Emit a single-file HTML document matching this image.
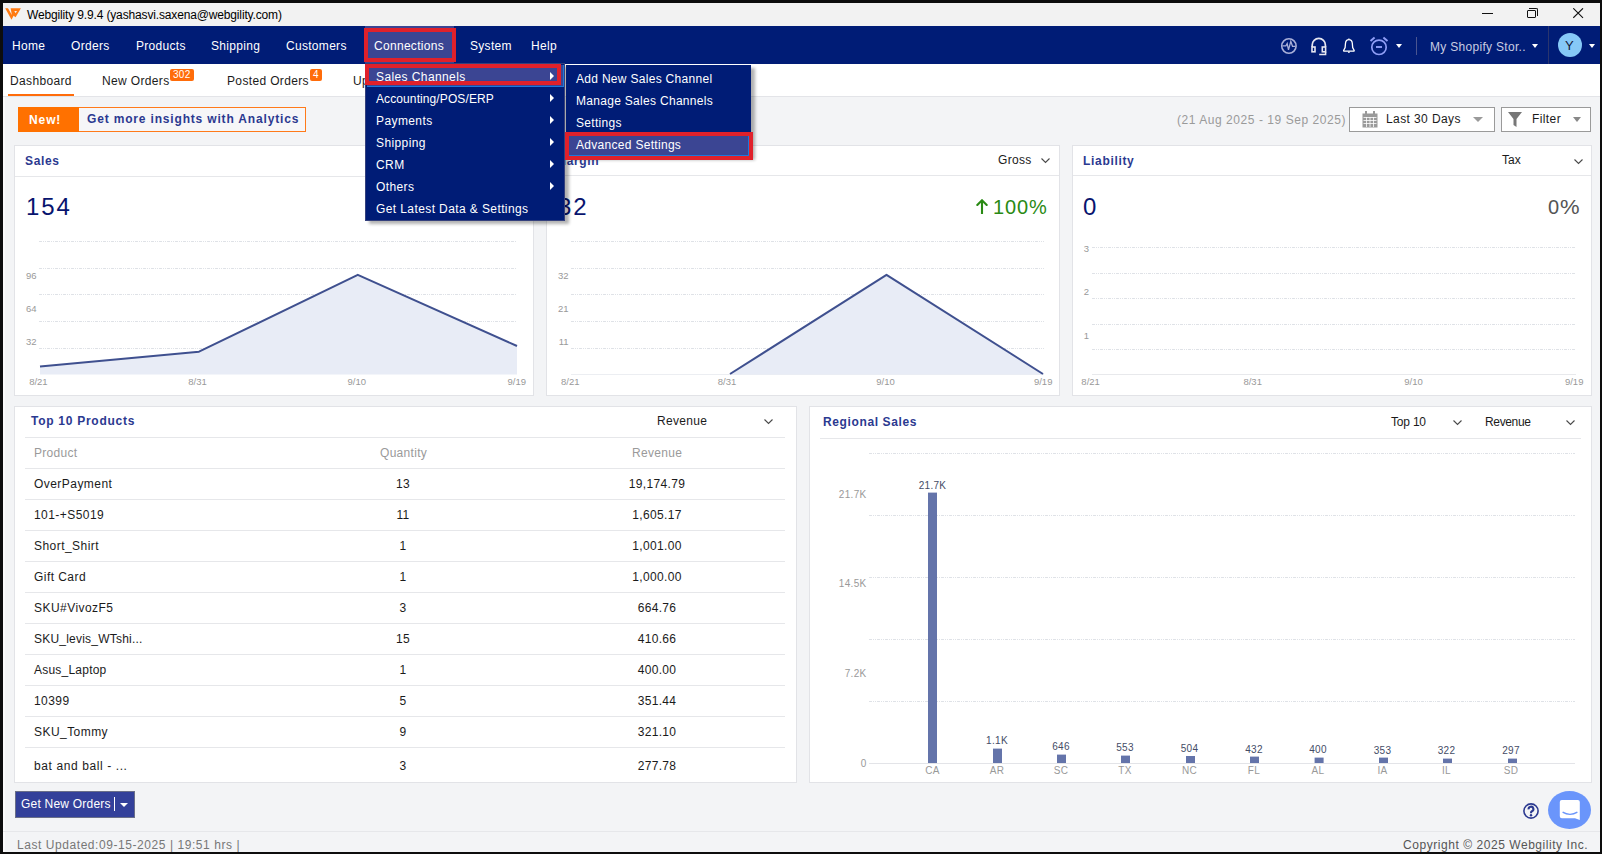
<!DOCTYPE html>
<html><head><meta charset="utf-8">
<style>
*{box-sizing:border-box;margin:0;padding:0}
html,body{width:1602px;height:854px;overflow:hidden;background:#f3f4f6;font-family:"Liberation Sans",sans-serif;font-size:12px;color:#222;position:relative}
.a{position:absolute;white-space:nowrap}
.bd{position:absolute;background:#0d0d0d;z-index:50}
#title{position:absolute;left:3px;top:3px;width:1597px;height:23px;background:#f2f2f2}
#nav{position:absolute;left:3px;top:26px;width:1597px;height:38px;background:#001c76}
.ni{position:absolute;top:27px;height:38px;line-height:38px;color:#fff;font-size:12px;letter-spacing:0.3px;white-space:nowrap}
#tabs{position:absolute;left:3px;top:64px;width:1597px;height:33px;background:#fff;border-bottom:1px solid #e3e4e8}
.tab{position:absolute;top:74px;font-size:12px;letter-spacing:0.35px;color:#1b1b1b;white-space:nowrap}
.badge{position:absolute;background:#ff6c0a;color:#fff;font-size:10px;height:12px;line-height:12px;border-radius:2px;padding:0 3px;letter-spacing:0.3px}
.card{position:absolute;background:#fff;border:1px solid #e2e3e7}
.ch{position:absolute;left:0;top:0;right:0;height:31px;border-bottom:1px solid #e6e7ea}
.ct{position:absolute;top:8px;left:10px;font-weight:bold;color:#2b3990;font-size:12px;letter-spacing:0.55px;white-space:nowrap}
.big{position:absolute;font-size:24px;color:#0c1e6e;white-space:nowrap}
.ax{position:absolute;font-size:9px;color:#8a8a8a;white-space:nowrap}
.menu{position:absolute;background:#001c76;box-shadow:4px 3px 3px rgba(0,0,0,0.3)}
.mi{position:absolute;height:22px;line-height:22px;color:#fff;font-size:12px;letter-spacing:0.4px;white-space:nowrap}
.arr{position:absolute;width:0;height:0;border-top:4px solid transparent;border-bottom:4px solid transparent;border-left:4px solid #fff}
.red{position:absolute;border:3px solid #e0212b}
.drop{position:absolute;font-size:12px;color:#1b1b1b;letter-spacing:0.3px;white-space:nowrap}
.chev{position:absolute;width:6px;height:6px;border-right:1px solid #444;border-bottom:1px solid #444;transform:rotate(45deg)}
.td{position:absolute;font-size:12px;color:#1b1b1b;letter-spacing:0.3px;white-space:nowrap}
.caret{position:absolute;width:0;height:0;border-left:3.5px solid transparent;border-right:3.5px solid transparent;border-top:4px solid #fff}
</style></head><body>
<!-- borders -->
<div class="bd" style="left:0;top:0;width:1602px;height:3px"></div>
<div class="bd" style="left:0;top:0;width:3px;height:854px"></div>
<div class="bd" style="left:1600px;top:0;width:2px;height:854px"></div>
<div class="bd" style="left:0;top:852px;width:1602px;height:2px"></div>

<div class="a" style="left:3px;top:97px;width:2px;height:755px;background:#fafafb"></div>
<div id="title"></div>
<svg class="a" style="left:5px;top:8px" width="17" height="13" viewBox="0 0 17 13"><path d="M0.2 0.3 L3 0.3 L6.9 6.9 L5.6 0.3 L15.9 0.3 L10.6 9.2 L8.6 7.8 L6.5 11.8 Z M9.3 3.1 L12 3.1 L10.6 5.2 Z" fill="#ff7a10" fill-rule="evenodd"/></svg>
<div class="a" style="left:27px;top:8px;font-size:12px;color:#000;letter-spacing:-0.15px">Webgility 9.9.4 (yashasvi.saxena@webgility.com)</div>
<!-- window controls -->
<div class="a" style="left:1482px;top:13px;width:11px;height:1px;background:#111"></div>
<div class="a" style="left:1527px;top:10px;width:9px;height:8px;border:1px solid #111;border-radius:1px"></div>
<div class="a" style="left:1529px;top:8px;width:9px;height:8px;border-top:1px solid #111;border-right:1px solid #111;border-top-right-radius:2px"></div>
<svg class="a" style="left:1573px;top:8px" width="11" height="11" viewBox="0 0 11 11"><path d="M0.3 0.3 L10 9.8 M10 0.3 L0.3 9.8" stroke="#111" stroke-width="1.1"/></svg>

<div id="nav"></div>
<div class="ni" style="left:12px">Home</div>
<div class="ni" style="left:71px">Orders</div>
<div class="ni" style="left:136px">Products</div>
<div class="ni" style="left:211px">Shipping</div>
<div class="ni" style="left:286px">Customers</div>
<div class="a" style="left:365px;top:26px;width:89px;height:37px;background:#3b4593"></div>
<div class="red" style="left:364px;top:28px;width:92px;height:34px;border-width:4px"></div>
<div class="ni" style="left:374px">Connections</div>
<div class="ni" style="left:470px">System</div>
<div class="ni" style="left:531px">Help</div>

<!-- right nav icons -->
<svg class="a" style="left:1276px;top:33px" width="134" height="27" viewBox="0 0 134 27">
<circle cx="12.9" cy="13" r="7.2" fill="none" stroke="#a9b0d9" stroke-width="1.6"/>
<polyline points="6.4,12.9 9.9,12.9 11.2,10.6 12.5,16.9 14.8,8.4 16.5,13.3 19.4,13.3" fill="none" stroke="#a9b0d9" stroke-width="1.3" stroke-linejoin="miter"/>
<path d="M36.2 14 V12 A6.6 6.6 0 0 1 49.4 12 V14" fill="none" stroke="#e6e7f0" stroke-width="1.7"/>
<rect x="36" y="14" width="3" height="4.8" fill="none" stroke="#e6e7f0" stroke-width="1.6"/>
<rect x="46.3" y="14" width="3.3" height="4.8" fill="none" stroke="#e6e7f0" stroke-width="1.6"/>
<path d="M49.6 18.8 V21.6 H43.2" fill="none" stroke="#e6e7f0" stroke-width="1.5"/>
<path d="M12.9 5.4 V6.6 M12.9 6.6 C10.6 6.6 9.7 8.2 9.5 10.2 L9.1 14.6 L7.7 17.2 Q7.3 18.1 8.3 18.1 H17.5 Q18.5 18.1 18.1 17.2 L16.7 14.6 L16.3 10.2 C16.1 8.2 15.2 6.6 12.9 6.6 Z" transform="translate(60,0)" fill="none" stroke="#ffffff" stroke-width="1.3" stroke-linejoin="round"/>
<path d="M72.9 18.6 V20" stroke="#fff" stroke-width="1.4"/>
<circle cx="103" cy="14.3" r="7.2" fill="none" stroke="#8f9ef6" stroke-width="1.7"/>
<path d="M100 14 H106" stroke="#8f9ef6" stroke-width="1.9"/>
<path d="M94.5 8 L98.6 4.6 M111.5 8 L107.4 4.6" stroke="#8f9ef6" stroke-width="2"/>
</svg>
<div class="caret" style="left:1396px;top:44px"></div>
<div class="a" style="left:1416px;top:37px;width:1px;height:18px;background:#4a5590"></div>
<div class="a" style="left:1430px;top:40px;font-size:12px;letter-spacing:0.3px;color:#c9cce2">My Shopify Stor..</div>
<div class="caret" style="left:1532px;top:44px"></div>
<div class="a" style="left:1548px;top:26px;width:1px;height:38px;background:#2a356e"></div>
<div class="a" style="left:1558px;top:33px;width:24px;height:24px;border-radius:50%;background:#86c9f7"></div>
<div class="a" style="left:1565px;top:38px;font-size:13px;color:#141a3a">Y</div>
<div class="caret" style="left:1589px;top:44px"></div>

<!-- tabs -->
<div id="tabs"></div>
<div class="tab" style="left:10px">Dashboard</div>
<div class="a" style="left:8px;top:94px;width:66px;height:2px;background:#ff6c0a"></div>
<div class="tab" style="left:102px">New Orders</div>
<div class="badge" style="left:170px;top:69px">302</div>
<div class="tab" style="left:227px">Posted Orders</div>
<div class="badge" style="left:310px;top:69px">4</div>
<div class="tab" style="left:353px">Up</div>

<!-- banner -->
<div class="a" style="left:18px;top:107px;width:288px;height:25px;border:1px solid #ff7a1a;background:#f6f6f8"></div>
<div class="a" style="left:18px;top:107px;width:61px;height:25px;background:#ff7100"></div>
<div class="a" style="left:29px;top:113px;font-size:12px;font-weight:bold;color:#fff;letter-spacing:0.9px">New!</div>
<div class="a" style="left:87px;top:112px;font-size:12px;font-weight:bold;color:#2b3990;letter-spacing:0.83px">Get more insights with Analytics</div>

<!-- date/filter -->
<div class="a" style="left:1177px;top:113px;font-size:12px;color:#9a9a9a;letter-spacing:0.55px">(21 Aug 2025 - 19 Sep 2025)</div>

<!-- date controls -->
<div class="a" style="left:1349px;top:107px;width:146px;height:25px;border:1px solid #9a9a9a;background:#fff"></div>
<svg class="a" style="left:1362px;top:111px" width="16" height="17" viewBox="0 0 16 17"><rect x="0.5" y="2.5" width="15" height="14" fill="#9a9a9a"/><rect x="3" y="0" width="2" height="4" fill="#9a9a9a"/><rect x="11" y="0" width="2" height="4" fill="#9a9a9a"/><path d="M1.5 6.5H14.5M1.5 9.5H14.5M1.5 12.5H14.5M4.5 6V16M8 6V16M11.5 6V16" stroke="#fff" stroke-width="0.8"/></svg>
<div class="a" style="left:1386px;top:112px;font-size:12px;color:#1b1b1b;letter-spacing:0.4px">Last 30 Days</div>
<div class="caret" style="left:1473px;top:117px;border-top-color:#9a9a9a;border-left-width:5px;border-right-width:5px;border-top-width:5px"></div>
<div class="a" style="left:1501px;top:107px;width:90px;height:25px;border:1px solid #9a9a9a;background:#fff"></div>
<svg class="a" style="left:1508px;top:112px" width="14" height="15" viewBox="0 0 14 15"><path d="M0 0H14L8.5 7V15L5.5 13V7Z" fill="#777"/></svg>
<div class="a" style="left:1532px;top:112px;font-size:12px;color:#1b1b1b;letter-spacing:0.4px">Filter</div>
<div class="caret" style="left:1573px;top:117px;border-top-color:#888;border-left-width:4px;border-right-width:4px;border-top-width:5px"></div>

<!-- row1 cards -->
<div class="card" style="left:14px;top:145px;width:520px;height:251px"></div>
<div class="a" style="left:15px;top:176px;width:518px;height:1px;background:#e6e7ea"></div>
<div class="a" style="left:25px;top:154px;font-size:12px;font-weight:bold;color:#2b3990;letter-spacing:0.66px">Sales</div>
<div class="a" style="left:26px;top:193px;font-size:24px;color:#08146e;letter-spacing:1.9px">154</div>

<div class="card" style="left:546px;top:145px;width:514px;height:251px"></div>
<div class="a" style="left:547px;top:175px;width:512px;height:1px;background:#e6e7ea"></div>
<div class="a" style="left:556px;top:154px;font-size:12px;font-weight:bold;color:#2b3990;letter-spacing:0.66px">Margin</div>
<div class="a" style="left:558px;top:193px;font-size:24px;color:#08146e;letter-spacing:1.9px">32</div>
<div class="a" style="left:998px;top:153px;font-size:12px;color:#1b1b1b;letter-spacing:0.3px">Gross</div>
<svg class="a" style="left:1041px;top:158px" width="10" height="6" viewBox="0 0 10 6"><path d="M0.5 0.5 L4.5 4.5 L8.5 0.5" fill="none" stroke="#4a4a4a" stroke-width="1.1"/></svg>
<svg class="a" style="left:976px;top:199px" width="12" height="16" viewBox="0 0 12 16"><path d="M6 1.5 V15" stroke="#2a8a14" stroke-width="2.1"/><path d="M1.3 6 L6 1.3 L10.7 6" fill="none" stroke="#2a8a14" stroke-width="2.1" stroke-linecap="round"/></svg>
<div class="a" style="left:993px;top:196px;font-size:20px;color:#2a8a14;letter-spacing:0.9px">100%</div>

<div class="card" style="left:1072px;top:145px;width:520px;height:251px"></div>
<div class="a" style="left:1073px;top:175px;width:518px;height:1px;background:#e6e7ea"></div>
<div class="a" style="left:1083px;top:154px;font-size:12px;font-weight:bold;color:#2b3990;letter-spacing:0.68px">Liability</div>
<div class="a" style="left:1083px;top:193px;font-size:24px;color:#08146e;letter-spacing:1.9px">0</div>
<div class="a" style="left:1502px;top:153px;font-size:12px;color:#1b1b1b">Tax</div>
<svg class="a" style="left:1574px;top:159px" width="10" height="6" viewBox="0 0 10 6"><path d="M0.5 0.5 L4.5 4.5 L8.5 0.5" fill="none" stroke="#4a4a4a" stroke-width="1.1"/></svg>
<div class="a" style="left:1548px;top:196px;font-size:20px;color:#555">0</div><div class="a" style="left:1560px;top:196px;font-size:20px;color:#555;transform:scaleX(1.1);transform-origin:0 0">%</div>

<!-- row2 cards -->
<div class="card" style="left:14px;top:406px;width:783px;height:377px"></div>
<div class="a" style="left:31px;top:414px;font-size:12px;font-weight:bold;color:#2b3990;letter-spacing:0.73px">Top 10 Products</div>
<div class="a" style="left:657px;top:414px;font-size:12px;color:#1b1b1b;letter-spacing:0.3px">Revenue</div>
<svg class="a" style="left:764px;top:419px" width="10" height="6" viewBox="0 0 10 6"><path d="M0.5 0.5 L4.5 4.5 L8.5 0.5" fill="none" stroke="#4a4a4a" stroke-width="1.1"/></svg>
<div class="a" style="left:25px;top:437px;width:760px;height:1px;background:#e6e7ea"></div>

<div class="card" style="left:809px;top:406px;width:783px;height:377px"></div>
<div class="a" style="left:823px;top:415px;font-size:12px;font-weight:bold;color:#2b3990;letter-spacing:0.62px">Regional Sales</div>
<div class="a" style="left:1391px;top:415px;font-size:12px;color:#1b1b1b;letter-spacing:-0.2px">Top 10</div>
<svg class="a" style="left:1453px;top:420px" width="10" height="6" viewBox="0 0 10 6"><path d="M0.5 0.5 L4.5 4.5 L8.5 0.5" fill="none" stroke="#4a4a4a" stroke-width="1.1"/></svg>
<div class="a" style="left:1485px;top:415px;font-size:12px;color:#1b1b1b;letter-spacing:-0.35px">Revenue</div>
<svg class="a" style="left:1566px;top:420px" width="10" height="6" viewBox="0 0 10 6"><path d="M0.5 0.5 L4.5 4.5 L8.5 0.5" fill="none" stroke="#4a4a4a" stroke-width="1.1"/></svg>
<div class="a" style="left:820px;top:438px;width:761px;height:1px;background:#e6e7ea"></div>

<div class="a" style="left:34px;top:446px;font-size:12px;color:#9a9a9a;letter-spacing:0.3px">Product</div>
<div class="a" style="left:380px;top:446px;font-size:12px;color:#9a9a9a;letter-spacing:0.3px">Quantity</div>
<div class="a" style="left:632px;top:446px;font-size:12px;color:#9a9a9a;letter-spacing:0.3px">Revenue</div>
<div class="a" style="left:25px;top:468px;width:760px;height:1px;background:#e6e7ea"></div>
<div class="a" style="left:34px;top:477px;font-size:12px;color:#1b1b1b;letter-spacing:0.45px">OverPayment</div>
<div class="a" style="left:353px;width:100px;text-align:center;top:477px;font-size:12px;color:#1b1b1b;letter-spacing:0.3px">13</div>
<div class="a" style="left:607px;width:100px;text-align:center;top:477px;font-size:12px;color:#1b1b1b;letter-spacing:0.33px">19,174.79</div>
<div class="a" style="left:25px;top:499px;width:760px;height:1px;background:#e6e7ea"></div>
<div class="a" style="left:34px;top:508px;font-size:12px;color:#1b1b1b;letter-spacing:0.45px">101-+S5019</div>
<div class="a" style="left:353px;width:100px;text-align:center;top:508px;font-size:12px;color:#1b1b1b;letter-spacing:0.3px">11</div>
<div class="a" style="left:607px;width:100px;text-align:center;top:508px;font-size:12px;color:#1b1b1b;letter-spacing:0.33px">1,605.17</div>
<div class="a" style="left:25px;top:530px;width:760px;height:1px;background:#e6e7ea"></div>
<div class="a" style="left:34px;top:539px;font-size:12px;color:#1b1b1b;letter-spacing:0.45px">Short_Shirt</div>
<div class="a" style="left:353px;width:100px;text-align:center;top:539px;font-size:12px;color:#1b1b1b;letter-spacing:0.3px">1</div>
<div class="a" style="left:607px;width:100px;text-align:center;top:539px;font-size:12px;color:#1b1b1b;letter-spacing:0.33px">1,001.00</div>
<div class="a" style="left:25px;top:561px;width:760px;height:1px;background:#e6e7ea"></div>
<div class="a" style="left:34px;top:570px;font-size:12px;color:#1b1b1b;letter-spacing:0.45px">Gift Card</div>
<div class="a" style="left:353px;width:100px;text-align:center;top:570px;font-size:12px;color:#1b1b1b;letter-spacing:0.3px">1</div>
<div class="a" style="left:607px;width:100px;text-align:center;top:570px;font-size:12px;color:#1b1b1b;letter-spacing:0.33px">1,000.00</div>
<div class="a" style="left:25px;top:592px;width:760px;height:1px;background:#e6e7ea"></div>
<div class="a" style="left:34px;top:601px;font-size:12px;color:#1b1b1b;letter-spacing:0.45px">SKU#VivozF5</div>
<div class="a" style="left:353px;width:100px;text-align:center;top:601px;font-size:12px;color:#1b1b1b;letter-spacing:0.3px">3</div>
<div class="a" style="left:607px;width:100px;text-align:center;top:601px;font-size:12px;color:#1b1b1b;letter-spacing:0.33px">664.76</div>
<div class="a" style="left:25px;top:623px;width:760px;height:1px;background:#e6e7ea"></div>
<div class="a" style="left:34px;top:632px;font-size:12px;color:#1b1b1b;letter-spacing:0.22px">SKU_levis_WTshi...</div>
<div class="a" style="left:353px;width:100px;text-align:center;top:632px;font-size:12px;color:#1b1b1b;letter-spacing:0.3px">15</div>
<div class="a" style="left:607px;width:100px;text-align:center;top:632px;font-size:12px;color:#1b1b1b;letter-spacing:0.33px">410.66</div>
<div class="a" style="left:25px;top:654px;width:760px;height:1px;background:#e6e7ea"></div>
<div class="a" style="left:34px;top:663px;font-size:12px;color:#1b1b1b;letter-spacing:0.22px">Asus_Laptop</div>
<div class="a" style="left:353px;width:100px;text-align:center;top:663px;font-size:12px;color:#1b1b1b;letter-spacing:0.3px">1</div>
<div class="a" style="left:607px;width:100px;text-align:center;top:663px;font-size:12px;color:#1b1b1b;letter-spacing:0.33px">400.00</div>
<div class="a" style="left:25px;top:685px;width:760px;height:1px;background:#e6e7ea"></div>
<div class="a" style="left:34px;top:694px;font-size:12px;color:#1b1b1b;letter-spacing:0.45px">10399</div>
<div class="a" style="left:353px;width:100px;text-align:center;top:694px;font-size:12px;color:#1b1b1b;letter-spacing:0.3px">5</div>
<div class="a" style="left:607px;width:100px;text-align:center;top:694px;font-size:12px;color:#1b1b1b;letter-spacing:0.33px">351.44</div>
<div class="a" style="left:25px;top:716px;width:760px;height:1px;background:#e6e7ea"></div>
<div class="a" style="left:34px;top:725px;font-size:12px;color:#1b1b1b;letter-spacing:0.45px">SKU_Tommy</div>
<div class="a" style="left:353px;width:100px;text-align:center;top:725px;font-size:12px;color:#1b1b1b;letter-spacing:0.3px">9</div>
<div class="a" style="left:607px;width:100px;text-align:center;top:725px;font-size:12px;color:#1b1b1b;letter-spacing:0.33px">321.10</div>
<div class="a" style="left:25px;top:747px;width:760px;height:1px;background:#e6e7ea"></div>
<div class="a" style="left:34px;top:759px;font-size:12px;color:#1b1b1b;letter-spacing:0.6px">bat and ball - ...</div>
<div class="a" style="left:353px;width:100px;text-align:center;top:759px;font-size:12px;color:#1b1b1b;letter-spacing:0.3px">3</div>
<div class="a" style="left:607px;width:100px;text-align:center;top:759px;font-size:12px;color:#1b1b1b;letter-spacing:0.33px">277.78</div>
<svg class="a" style="left:0;top:0" width="1602" height="854" viewBox="0 0 1602 854">
<line x1="39" y1="241.5" x2="517" y2="241.5" stroke="#dfe2e7" stroke-width="1" stroke-dasharray="3 1 1 1 1 1" shape-rendering="crispEdges"/>
<line x1="39" y1="268.5" x2="517" y2="268.5" stroke="#dfe2e7" stroke-width="1" stroke-dasharray="3 1 1 1 1 1" shape-rendering="crispEdges"/>
<line x1="39" y1="294.5" x2="517" y2="294.5" stroke="#dfe2e7" stroke-width="1" stroke-dasharray="3 1 1 1 1 1" shape-rendering="crispEdges"/>
<line x1="39" y1="321.5" x2="517" y2="321.5" stroke="#dfe2e7" stroke-width="1" stroke-dasharray="3 1 1 1 1 1" shape-rendering="crispEdges"/>
<line x1="39" y1="348.5" x2="517" y2="348.5" stroke="#dfe2e7" stroke-width="1" stroke-dasharray="3 1 1 1 1 1" shape-rendering="crispEdges"/>
<polygon points="40,366.6 199,351.7 357.8,274.8 517,346 517,374.5 40,374.5" fill="#e8ecf6"/>
<polyline points="40,366.6 199,351.7 357.8,274.8 517,346" fill="none" stroke="#3f508f" stroke-width="2" stroke-linejoin="round"/>
<line x1="571" y1="241.5" x2="1044" y2="241.5" stroke="#dfe2e7" stroke-width="1" stroke-dasharray="3 1 1 1 1 1" shape-rendering="crispEdges"/>
<line x1="571" y1="268.5" x2="1044" y2="268.5" stroke="#dfe2e7" stroke-width="1" stroke-dasharray="3 1 1 1 1 1" shape-rendering="crispEdges"/>
<line x1="571" y1="294.5" x2="1044" y2="294.5" stroke="#dfe2e7" stroke-width="1" stroke-dasharray="3 1 1 1 1 1" shape-rendering="crispEdges"/>
<line x1="571" y1="321.5" x2="1044" y2="321.5" stroke="#dfe2e7" stroke-width="1" stroke-dasharray="3 1 1 1 1 1" shape-rendering="crispEdges"/>
<line x1="571" y1="348.5" x2="1044" y2="348.5" stroke="#dfe2e7" stroke-width="1" stroke-dasharray="3 1 1 1 1 1" shape-rendering="crispEdges"/>
<line x1="571" y1="374.5" x2="1044" y2="374.5" stroke="#eceef2" stroke-width="1"/>
<polygon points="730,374.5 886.5,274.8 1043,374.5" fill="#e8ecf6"/>
<polyline points="730,374 886.5,274.8 1043,374" fill="none" stroke="#3f508f" stroke-width="2" stroke-linejoin="round"/>
<line x1="1092" y1="247.5" x2="1576" y2="247.5" stroke="#dfe2e7" stroke-width="1" stroke-dasharray="3 1 1 1 1 1" shape-rendering="crispEdges"/>
<line x1="1092" y1="273.5" x2="1576" y2="273.5" stroke="#dfe2e7" stroke-width="1" stroke-dasharray="3 1 1 1 1 1" shape-rendering="crispEdges"/>
<line x1="1092" y1="298.5" x2="1576" y2="298.5" stroke="#dfe2e7" stroke-width="1" stroke-dasharray="3 1 1 1 1 1" shape-rendering="crispEdges"/>
<line x1="1092" y1="324.5" x2="1576" y2="324.5" stroke="#dfe2e7" stroke-width="1" stroke-dasharray="3 1 1 1 1 1" shape-rendering="crispEdges"/>
<line x1="1092" y1="349.5" x2="1576" y2="349.5" stroke="#dfe2e7" stroke-width="1" stroke-dasharray="3 1 1 1 1 1" shape-rendering="crispEdges"/>
<line x1="1092" y1="374.5" x2="1576" y2="374.5" stroke="#e8e9ec" stroke-width="1"/>
<line x1="869" y1="453.5" x2="1575" y2="453.5" stroke="#dfe2e7" stroke-width="1" stroke-dasharray="3 1 1 1 1 1" shape-rendering="crispEdges"/>
<line x1="869" y1="515.5" x2="1575" y2="515.5" stroke="#dfe2e7" stroke-width="1" stroke-dasharray="3 1 1 1 1 1" shape-rendering="crispEdges"/>
<line x1="869" y1="577.5" x2="1575" y2="577.5" stroke="#dfe2e7" stroke-width="1" stroke-dasharray="3 1 1 1 1 1" shape-rendering="crispEdges"/>
<line x1="869" y1="639.5" x2="1575" y2="639.5" stroke="#dfe2e7" stroke-width="1" stroke-dasharray="3 1 1 1 1 1" shape-rendering="crispEdges"/>
<line x1="869" y1="701.5" x2="1575" y2="701.5" stroke="#dfe2e7" stroke-width="1" stroke-dasharray="3 1 1 1 1 1" shape-rendering="crispEdges"/>
<line x1="869" y1="763.5" x2="1575" y2="763.5" stroke="#e3e4e8" stroke-width="1"/>
<rect x="928" y="492.6" width="9" height="270.4" fill="#6474aa"/>
<rect x="993" y="748.6" width="9" height="14.399999999999977" fill="#6474aa"/>
<rect x="1057" y="754.6" width="9" height="8.399999999999977" fill="#6474aa"/>
<rect x="1121" y="755.6" width="9" height="7.399999999999977" fill="#6474aa"/>
<rect x="1186" y="756" width="9" height="7" fill="#6474aa"/>
<rect x="1250" y="756.6" width="9" height="6.399999999999977" fill="#6474aa"/>
<rect x="1314.6" y="757.6" width="9" height="5.399999999999977" fill="#6474aa"/>
<rect x="1379" y="757.6" width="9" height="5.399999999999977" fill="#6474aa"/>
<rect x="1443" y="758.6" width="9" height="4.399999999999977" fill="#6474aa"/>
<rect x="1508" y="758.6" width="9" height="4.399999999999977" fill="#6474aa"/>
<text x="36.5" y="279.1" font-family="Liberation Sans" font-size="9.5" fill="#999999" text-anchor="end" letter-spacing="0">96</text>
<text x="36.5" y="312.1" font-family="Liberation Sans" font-size="9.5" fill="#999999" text-anchor="end" letter-spacing="0">64</text>
<text x="36.5" y="345.0" font-family="Liberation Sans" font-size="9.5" fill="#999999" text-anchor="end" letter-spacing="0">32</text>
<text x="38.4" y="385.0" font-family="Liberation Sans" font-size="9.5" fill="#999999" text-anchor="middle" letter-spacing="0">8/21</text>
<text x="197.5" y="385.0" font-family="Liberation Sans" font-size="9.5" fill="#999999" text-anchor="middle" letter-spacing="0">8/31</text>
<text x="356.8" y="385.0" font-family="Liberation Sans" font-size="9.5" fill="#999999" text-anchor="middle" letter-spacing="0">9/10</text>
<text x="516.8" y="385.0" font-family="Liberation Sans" font-size="9.5" fill="#999999" text-anchor="middle" letter-spacing="0">9/19</text>
<text x="568.6" y="278.8" font-family="Liberation Sans" font-size="9.5" fill="#999999" text-anchor="end" letter-spacing="0">32</text>
<text x="568.6" y="311.8" font-family="Liberation Sans" font-size="9.5" fill="#999999" text-anchor="end" letter-spacing="0">21</text>
<text x="568.6" y="345.3" font-family="Liberation Sans" font-size="9.5" fill="#999999" text-anchor="end" letter-spacing="0">11</text>
<text x="570.3" y="384.6" font-family="Liberation Sans" font-size="9.5" fill="#999999" text-anchor="middle" letter-spacing="0">8/21</text>
<text x="727" y="384.6" font-family="Liberation Sans" font-size="9.5" fill="#999999" text-anchor="middle" letter-spacing="0">8/31</text>
<text x="885.5" y="384.6" font-family="Liberation Sans" font-size="9.5" fill="#999999" text-anchor="middle" letter-spacing="0">9/10</text>
<text x="1043.2" y="384.6" font-family="Liberation Sans" font-size="9.5" fill="#999999" text-anchor="middle" letter-spacing="0">9/19</text>
<text x="1089" y="251.70000000000002" font-family="Liberation Sans" font-size="9.5" fill="#999999" text-anchor="end" letter-spacing="0">3</text>
<text x="1089" y="295.1" font-family="Liberation Sans" font-size="9.5" fill="#999999" text-anchor="end" letter-spacing="0">2</text>
<text x="1089" y="339.2" font-family="Liberation Sans" font-size="9.5" fill="#999999" text-anchor="end" letter-spacing="0">1</text>
<text x="1090.6" y="385.0" font-family="Liberation Sans" font-size="9.5" fill="#999999" text-anchor="middle" letter-spacing="0">8/21</text>
<text x="1252.7" y="385.0" font-family="Liberation Sans" font-size="9.5" fill="#999999" text-anchor="middle" letter-spacing="0">8/31</text>
<text x="1413.5" y="385.0" font-family="Liberation Sans" font-size="9.5" fill="#999999" text-anchor="middle" letter-spacing="0">9/10</text>
<text x="1574.2" y="385.0" font-family="Liberation Sans" font-size="9.5" fill="#999999" text-anchor="middle" letter-spacing="0">9/19</text>
<text x="866.5" y="497.6" font-family="Liberation Sans" font-size="10" fill="#999999" text-anchor="end" letter-spacing="0.3">21.7K</text>
<text x="866.5" y="586.6" font-family="Liberation Sans" font-size="10" fill="#999999" text-anchor="end" letter-spacing="0.3">14.5K</text>
<text x="866.5" y="677.1" font-family="Liberation Sans" font-size="10" fill="#999999" text-anchor="end" letter-spacing="0.3">7.2K</text>
<text x="866.5" y="766.6" font-family="Liberation Sans" font-size="10" fill="#999999" text-anchor="end" letter-spacing="0.3">0</text>
<text x="932.5" y="489.20000000000005" font-family="Liberation Sans" font-size="10" fill="#444c66" text-anchor="middle" letter-spacing="0.3">21.7K</text>
<text x="997" y="743.6" font-family="Liberation Sans" font-size="10" fill="#444c66" text-anchor="middle" letter-spacing="0.3">1.1K</text>
<text x="1061" y="749.6" font-family="Liberation Sans" font-size="10" fill="#444c66" text-anchor="middle" letter-spacing="0.3">646</text>
<text x="1125" y="750.6" font-family="Liberation Sans" font-size="10" fill="#444c66" text-anchor="middle" letter-spacing="0.3">553</text>
<text x="1189.5" y="751.6" font-family="Liberation Sans" font-size="10" fill="#444c66" text-anchor="middle" letter-spacing="0.3">504</text>
<text x="1254" y="752.6" font-family="Liberation Sans" font-size="10" fill="#444c66" text-anchor="middle" letter-spacing="0.3">432</text>
<text x="1318" y="752.6" font-family="Liberation Sans" font-size="10" fill="#444c66" text-anchor="middle" letter-spacing="0.3">400</text>
<text x="1382.5" y="753.6" font-family="Liberation Sans" font-size="10" fill="#444c66" text-anchor="middle" letter-spacing="0.3">353</text>
<text x="1446.5" y="753.6" font-family="Liberation Sans" font-size="10" fill="#444c66" text-anchor="middle" letter-spacing="0.3">322</text>
<text x="1511" y="753.6" font-family="Liberation Sans" font-size="10" fill="#444c66" text-anchor="middle" letter-spacing="0.3">297</text>
<text x="932.5" y="773.6" font-family="Liberation Sans" font-size="10" fill="#999999" text-anchor="middle" letter-spacing="0.3">CA</text>
<text x="997" y="773.6" font-family="Liberation Sans" font-size="10" fill="#999999" text-anchor="middle" letter-spacing="0.3">AR</text>
<text x="1061" y="773.6" font-family="Liberation Sans" font-size="10" fill="#999999" text-anchor="middle" letter-spacing="0.3">SC</text>
<text x="1125" y="773.6" font-family="Liberation Sans" font-size="10" fill="#999999" text-anchor="middle" letter-spacing="0.3">TX</text>
<text x="1189.5" y="773.6" font-family="Liberation Sans" font-size="10" fill="#999999" text-anchor="middle" letter-spacing="0.3">NC</text>
<text x="1254" y="773.6" font-family="Liberation Sans" font-size="10" fill="#999999" text-anchor="middle" letter-spacing="0.3">FL</text>
<text x="1318" y="773.6" font-family="Liberation Sans" font-size="10" fill="#999999" text-anchor="middle" letter-spacing="0.3">AL</text>
<text x="1382.5" y="773.6" font-family="Liberation Sans" font-size="10" fill="#999999" text-anchor="middle" letter-spacing="0.3">IA</text>
<text x="1446.5" y="773.6" font-family="Liberation Sans" font-size="10" fill="#999999" text-anchor="middle" letter-spacing="0.3">IL</text>
<text x="1511" y="773.6" font-family="Liberation Sans" font-size="10" fill="#999999" text-anchor="middle" letter-spacing="0.3">SD</text>
</svg>

<!-- main menu -->
<div class="menu" style="left:365px;top:63px;width:200px;height:158px;border:1px solid #34407c"></div>
<div class="a" style="left:367px;top:65px;width:197px;height:22px;background:#3b4593;border-bottom:1px solid #1c78dc;border-right:1px solid #1c78dc"></div>
<div class="red" style="left:365px;top:64px;width:195.5px;height:21px;border-width:4px"></div>
<div class="mi" style="left:376px;top:66px">Sales Channels</div>
<div class="mi" style="left:376px;top:88px;letter-spacing:0.1px">Accounting/POS/ERP</div>
<div class="mi" style="left:376px;top:110px">Payments</div>
<div class="mi" style="left:376px;top:132px">Shipping</div>
<div class="mi" style="left:376px;top:154px">CRM</div>
<div class="mi" style="left:376px;top:176px">Others</div>
<div class="mi" style="left:376px;top:198px">Get Latest Data &amp; Settings</div>
<div class="arr" style="left:550px;top:72px"></div>
<div class="arr" style="left:550px;top:94px"></div>
<div class="arr" style="left:550px;top:116px"></div>
<div class="arr" style="left:550px;top:138px"></div>
<div class="arr" style="left:550px;top:160px"></div>
<div class="arr" style="left:550px;top:182px"></div>
<!-- submenu -->
<div class="menu" style="left:566px;top:65px;width:185px;height:92px"></div>
<div class="a" style="left:569px;top:135px;width:180px;height:21px;background:#3b4593;border-bottom:1px solid #1c78dc;border-right:1px solid #1c78dc"></div>
<div class="red" style="left:565px;top:132px;width:188px;height:27.6px;border-width:4px"></div>
<div class="mi" style="left:576px;top:68px;letter-spacing:0.3px">Add New Sales Channel</div>
<div class="mi" style="left:576px;top:90px;letter-spacing:0.3px">Manage Sales Channels</div>
<div class="mi" style="left:576px;top:112px;letter-spacing:0.3px">Settings</div>
<div class="mi" style="left:576px;top:134px;letter-spacing:0.3px">Advanced Settings</div>

<!-- bottom -->
<div class="a" style="left:15px;top:791px;width:120px;height:27px;background:#33409a;border:1px solid #6a6f88"></div>
<div class="a" style="left:21px;top:797px;font-size:12px;color:#fff;letter-spacing:0.22px">Get New Orders</div>
<div class="a" style="left:114px;top:797px;width:1px;height:14px;background:#fff"></div>
<div class="caret" style="left:120px;top:803px;border-left-width:4px;border-right-width:4px;border-top-width:4px"></div>
<svg class="a" style="left:1522px;top:802px" width="18" height="18" viewBox="0 0 18 18"><circle cx="9" cy="9" r="7.1" fill="none" stroke="#2b3990" stroke-width="1.6"/><path d="M6.6 7.3 A2.4 2.4 0 1 1 9.9 9.3 C9.1 9.7 9 10.2 9 11.2" fill="none" stroke="#2b3990" stroke-width="2.1"/><circle cx="9" cy="13.3" r="1.2" fill="#2b3990"/></svg>
<div class="a" style="left:1548px;top:791px;width:43px;height:38px;border-radius:50%;background:#6a95fb"></div>
<svg class="a" style="left:1559px;top:799px" width="22" height="22" viewBox="0 0 22 22"><path d="M2.8 1 H18.8 A2 2 0 0 1 20.8 3 V21 L16 19.2 H2.8 A2 2 0 0 1 0.8 17.2 V3 A2 2 0 0 1 2.8 1 Z" fill="#fff"/><path d="M3.6 13.2 Q11 17.6 18.4 13.2" fill="none" stroke="#6a95fb" stroke-width="1.4"/></svg>
<div class="a" style="left:3px;top:831px;width:1597px;height:1px;background:#e6e7ea"></div>
<div class="a" style="left:17px;top:838px;font-size:12px;color:#777;letter-spacing:0.56px">Last Updated:09-15-2025 | 19:51 hrs |</div>
<div class="a" style="left:1403px;top:838px;font-size:12px;color:#555;letter-spacing:0.55px">Copyright © 2025 Webgility Inc.</div>

</body></html>
